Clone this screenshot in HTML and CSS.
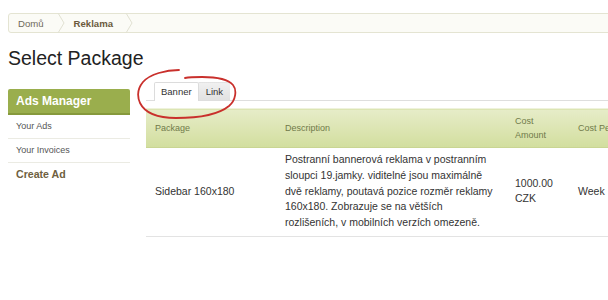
FILE: index.html
```html
<!DOCTYPE html>
<html lang="cs">
<head>
<meta charset="utf-8">
<title>Select Package</title>
<link rel="stylesheet" href="styles.css">
</head>
<body>
<div class="page">
  <nav class="crumbs">
    <a class="crumb" href="#">Domů</a>
    <svg class="chev" width="8" height="20" viewBox="0 0 8 20"><polyline points="1,0 7,10 1,20" fill="none" stroke="#e2e2d2" stroke-width="1"/></svg>
    <span class="crumb current">Reklama</span>
    <svg class="chev" width="8" height="20" viewBox="0 0 8 20"><polyline points="1,0 7,10 1,20" fill="none" stroke="#e2e2d2" stroke-width="1"/></svg>
  </nav>
  <h1 class="title">Select Package</h1>
  <div class="layout">
    <aside class="side">
      <div class="side-head">Ads Manager</div>
      <a class="side-item" href="#">Your Ads</a>
      <a class="side-item" href="#">Your Invoices</a>
      <a class="side-item strong" href="#">Create Ad</a>
    </aside>
    <main class="main">
      <div class="tabs">
        <span class="tab active">Banner</span>
        <span class="tab">Link</span>
      </div>
      <table class="pkg">
        <colgroup>
          <col class="c1"><col class="c2"><col class="c3"><col class="c4">
        </colgroup>
        <thead>
          <tr><th>Package</th><th>Description</th><th>Cost Amount</th><th>Cost Period</th></tr>
        </thead>
        <tbody>
          <tr>
            <td>Sidebar 160x180</td>
            <td>Postranní bannerová reklama v postranním sloupci 19.jamky. viditelné jsou maximálně dvě reklamy, poutavá pozice rozměr reklamy 160x180. Zobrazuje se na větších rozlišeních, v mobilních verzích omezeně.</td>
            <td>1000.00 CZK</td>
            <td>Week</td>
          </tr>
        </tbody>
      </table>
    </main>
  </div>
  <svg class="scribble" width="110" height="60" viewBox="0 0 110 60">
    <path d="M43,2 C30,2 14,6 7,14 C2,20 1,28 4,35 C9,45 22,50 40,50 C60,50 82,47 93,38 C100,32 101,22 97,17 C92,11 80,9 66,9 C60,9 54,9 49,10" fill="none" stroke="#c9302c" stroke-width="1.8" stroke-linecap="round"/>
  </svg>
</div>
</body>
</html>
```
FILE: styles.css
```css
html, body {
  margin: 0;
  padding: 0;
  overflow: hidden;
  background: #ffffff;
}
body {
  font-family: "Liberation Sans", Arial, Helvetica, sans-serif;
  color: #333333;
}
.page {
  position: relative;
  width: 680px;
  padding: 13px 0 0 8px;
}
.crumbs {
  display: flex;
  align-items: center;
  height: 18px;
  border: 1px solid #e4e4d2;
  border-radius: 3px;
  background: #fbfbf6;
  font-size: 9.6px;
}
.crumb {
  color: #6f6a5c;
  text-decoration: none;
  padding: 0 13px 0 9px;
}
.crumb.current {
  color: #6b5a3c;
  font-weight: bold;
  padding: 0 12px 0 9px;
}
.chev {
  display: block;
}
.title {
  margin: 13.5px 0 0 0;
  font-size: 19.5px;
  line-height: 22px;
  font-weight: normal;
  color: #222222;
}
.layout {
  display: flex;
  gap: 16px;
  margin-top: 13.5px;
}
.side {
  width: 122px;
  flex: none;
  margin-top: 7px;
}
.side-head {
  height: 24px;
  line-height: 25px;
  padding-left: 8px;
  background: #9aae4d;
  border-bottom: 2px solid #86993c;
  border-radius: 2px 2px 0 0;
  color: #ffffff;
  font-weight: bold;
  font-size: 12px;
}
.side-item {
  display: block;
  height: 23px;
  line-height: 23px;
  padding-left: 8px;
  border-bottom: 1px solid #ebebe3;
  color: #555555;
  text-decoration: none;
  font-size: 9px;
}
.side-item.strong {
  border-bottom: none;
  font-weight: bold;
  font-size: 10.6px;
  color: #6f5f40;
}
.main {
  flex: 1;
}
.tabs {
  display: flex;
  align-items: flex-end;
  height: 18px;
  padding-left: 8px;
  border-bottom: 1px solid #dedede;
}
.tab {
  display: block;
  height: 17px;
  line-height: 17px;
  padding: 0 6px;
  font-size: 9.5px;
  color: #333333;
  background: linear-gradient(#f0f0f0, #e2e2e2);
  border: 1px solid transparent;
  border-bottom: none;
  margin-bottom: 0;
}
.tab.active {
  background: #ffffff;
  border: 1px solid #dcdcdc;
  border-bottom: none;
  height: 18px;
  margin-bottom: -1px;
  border-radius: 2px 2px 0 0;
}
.pkg {
  margin-top: 7px;
  width: 520px;
  table-layout: fixed;
  border-collapse: collapse;
}
.c1 { width: 130px; }
.c2 { width: 230px; }
.c3 { width: 63px; }
.c4 { width: 97px; }
.pkg th {
  text-align: left;
  font-weight: normal;
  font-size: 9px;
  line-height: 14px;
  color: #707a4a;
  padding: 5px 9px;
  background: linear-gradient(#e6ecc8, #d2de9e);
  border-top: 1px solid #eef2dc;
  border-bottom: 1px solid #c9d593;
  vertical-align: middle;
  white-space: normal;
}
.pkg th:last-child {
  white-space: nowrap;
}
.pkg td {
  font-size: 10.5px;
  line-height: 15.8px;
  padding: 4px 9px 5px 9px;
  vertical-align: middle;
  border-bottom: 1px solid #e3e3e3;
  color: #333333;
}
.scribble {
  position: absolute;
  left: 136px;
  top: 68px;
}
```
